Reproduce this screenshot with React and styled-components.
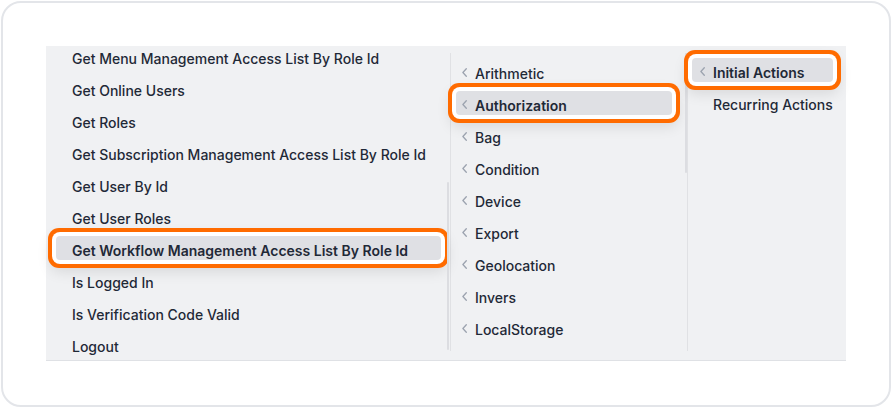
import React from "react";
import styled, { createGlobalStyle, css } from "styled-components";

const Global = createGlobalStyle`
  html, body { margin: 0; padding: 0; background: #ffffff; }
  body { font-family: Inter, "Noto Sans", "Liberation Sans", sans-serif; }
  * { box-sizing: border-box; }
`;

const Card = styled.div`
  margin: 1px;
  width: 890px;
  height: 406px;
  border: 2px solid #e3e5e9;
  border-radius: 20px;
  background: #ffffff;
  padding: 43px 43px 0 43px;
`;

const Panel = styled.div`
  display: flex;
  width: 800px;
  height: 315px;
  background: #f0f1f3;
  border-bottom: 1px solid #dfe1e5;
`;

const Column = styled.div`
  position: relative;
  width: ${(p) => (p.$width ? `${p.$width}px` : "auto")};
  flex: ${(p) => (p.$width ? "none" : "1")};
  padding-top: ${(p) => p.$top || 0}px;
`;

const List = styled.div`
  display: flex;
  flex-direction: column;
  margin-top: ${(p) => p.$offset || 0}px;
`;

const Divider = styled.div`
  width: 1px;
  flex: none;
  margin: 7px 0 9px;
  background: #e0e1e4;
`;

const Thumb = styled.div`
  position: absolute;
  right: ${(p) => p.$right}px;
  width: 2px;
  border-radius: 1px;
  background: #dcdde1;
`;

const Row = styled.div`
  height: 32px;
  display: flex;
  align-items: center;
`;

const activeStyle = css`
  background: #dfe0e4;
  font-weight: 600;
  box-shadow: 0 0 0 4px #ffffff, 0 0 0 8px #ff6b00, 0 6px 14px 6px rgba(0, 0, 0, 0.1);
`;

const Item = styled.div`
  flex: 1;
  height: 24px;
  margin: 0 ${(p) => p.$mr}px 0 ${(p) => p.$ml}px;
  padding: 4px 0 0 ${(p) => p.$pl}px;
  border-radius: 4px;
  display: flex;
  align-items: center;
  gap: 8px;
  font-size: 14px;
  font-weight: 500;
  color: #1f2937;
  white-space: nowrap;
  position: relative;
  ${(p) => p.$active && activeStyle}
`;

const ChevronBox = styled.span`
  width: 5px;
  height: 10px;
  display: inline-flex;
  align-items: center;
  margin-top: -2px;
  visibility: ${(p) => (p.$hidden ? "hidden" : "visible")};
`;

const Chevron = ({ hidden }) => (
  <ChevronBox $hidden={hidden}>
    <svg width="5" height="9" viewBox="0 0 5 9" fill="none">
      <path d="M4.3 0.8 L0.9 4.5 L4.3 8.2" stroke="#9ca3af" strokeWidth="1.3" strokeLinecap="round" strokeLinejoin="round" />
    </svg>
  </ChevronBox>
);

const col1 = [
  "Get Menu Management Access List By Role Id",
  "Get Online Users",
  "Get Roles",
  "Get Subscription Management Access List By Role Id",
  "Get User By Id",
  "Get User Roles",
  "Get Workflow Management Access List By Role Id",
  "Is Logged In",
  "Is Verification Code Valid",
  "Logout",
];

const col2 = [
  "Arithmetic",
  "Authorization",
  "Bag",
  "Condition",
  "Device",
  "Export",
  "Geolocation",
  "Invers",
  "LocalStorage",
];

const col3 = [
  { label: "Initial Actions", chevron: true },
  { label: "Recurring Actions", chevron: false },
];

export default function App() {
  return (
    <>
      <Global />
      <Card>
        <Panel>
          <Column $width={404}>
            <List $offset={-6}>
              {col1.map((t) => (
                <Row key={t}>
                  <Item $ml={10} $mr={9} $pl={16} $active={t.startsWith("Get Workflow")}>
                    {t}
                  </Item>
                </Row>
              ))}
            </List>
            <Thumb $right={1} style={{ top: 136, height: 168 }} />
          </Column>
          <Divider />
          <Column $width={236} $top={9}>
            <List>
              {col2.map((t) => (
                <Row key={t}>
                  <Item $ml={5} $mr={15} $pl={6} $active={t === "Authorization"}>
                    <Chevron />
                    {t}
                  </Item>
                </Row>
              ))}
            </List>
            <Thumb $right={0} style={{ top: 7, height: 120 }} />
          </Column>
          <Divider />
          <Column $top={8}>
            <List>
              {col3.map((c) => (
                <Row key={c.label}>
                  <Item $ml={4} $mr={14} $pl={8} $active={c.label === "Initial Actions"}>
                    <Chevron hidden={!c.chevron} />
                    {c.label}
                  </Item>
                </Row>
              ))}
            </List>
          </Column>
        </Panel>
      </Card>
    </>
  );
}
